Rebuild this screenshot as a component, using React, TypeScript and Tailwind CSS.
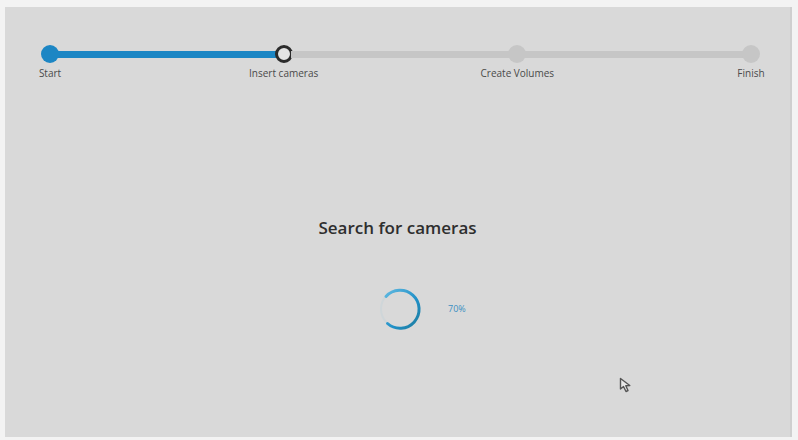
import React from 'react';

interface Step {
    label: string;
    state: 'done' | 'current' | 'todo';
}

const steps: Step[] = [
    { label: 'Start', state: 'done' },
    { label: 'Insert cameras', state: 'current' },
    { label: 'Create Volumes', state: 'todo' },
    { label: 'Finish', state: 'todo' },
];

function Dot({ state }: { state: Step['state'] }) {
    if (state === 'done') return <div className="w-[18px] h-[18px] rounded-full bg-[#1c86c4] shrink-0" />;
    if (state === 'current') return <div className="w-[18px] h-[18px] rounded-full border-[3px] border-[#2b2b2b] bg-[#e4e4e4] shrink-0" />;
    return <div className="w-[18px] h-[18px] rounded-full bg-[#c6c6c6] shrink-0" />;
}

function Stepper() {
    return (
        <div className="pl-[36px] pr-[30px] pt-[38px]">
            <div className="flex items-center">
                {steps.map((s, i) => (
                    <React.Fragment key={s.label}>
                        {i > 0 && (
                            <div className={`flex-1 h-[7px] -mx-[2px] ${steps[i - 1].state === 'done' ? 'bg-[#1c86c4]' : 'bg-[#c6c6c6]'}`} />
                        )}
                        <Dot state={s.state} />
                    </React.Fragment>
                ))}
            </div>
            <div className="flex justify-between px-[9px] mt-[3px]">
                {steps.map(s => (
                    <div key={s.label} className="w-0 flex justify-center">
                        <span className="whitespace-nowrap text-[10px] leading-[14px] text-[#4a4a4a]">{s.label}</span>
                    </div>
                ))}
            </div>
        </div>
    );
}

function Spinner() {
    return (
        <svg width="46" height="46" viewBox="0 0 46 46">
            <defs>
                <linearGradient id="spin" x1="0" y1="0" x2="1" y2="1">
                    <stop offset="0%" stopColor="#5fb8e0" />
                    <stop offset="60%" stopColor="#1f8fc6" />
                    <stop offset="100%" stopColor="#1f7c9c" />
                </linearGradient>
            </defs>
            <circle cx="23" cy="23" r="19" fill="none" stroke="#cfd6d9" strokeWidth="2" />
            <path d="M 9 10.5 A 19 19 0 1 1 10.5 37.5" fill="none" stroke="url(#spin)" strokeWidth="3" strokeLinecap="round" />
        </svg>
    );
}

function Pointer() {
    return (
        <svg width="14" height="16" viewBox="0 0 14 16" className="absolute left-[619px] top-[377px]">
            <path d="M1.5 1.5 L1.5 12 L4.5 9.5 L7 14.5 L9 13.5 L6.8 8.7 L10.8 8.5 Z" fill="#e8e8e8" stroke="#555" strokeWidth="1.4" strokeLinejoin="round" />
        </svg>
    );
}

export default function App() {
    return (
        <div className="w-[798px] h-[440px] bg-[#f3f3f3] pt-[7px] pl-[5px] relative" style={{ fontFamily: '"Open Sans", "Noto Sans", sans-serif' }}>
            <div className="w-[787px] h-[430px] bg-[#d9d9d9] border-r-[2px] border-[#cfcfcf] flex flex-col">
                <Stepper />
                <h1 className="mt-[137px] text-center text-[17px] font-semibold text-[#2e2e2e] leading-[22px]">Search for cameras</h1>
                <div className="mt-[47px] flex items-center pl-[372px]">
                    <Spinner />
                    <span className="ml-[25px] text-[9px] text-[#3b8fc2]">70%</span>
                </div>
            </div>
            <Pointer />
        </div>
    );
}
